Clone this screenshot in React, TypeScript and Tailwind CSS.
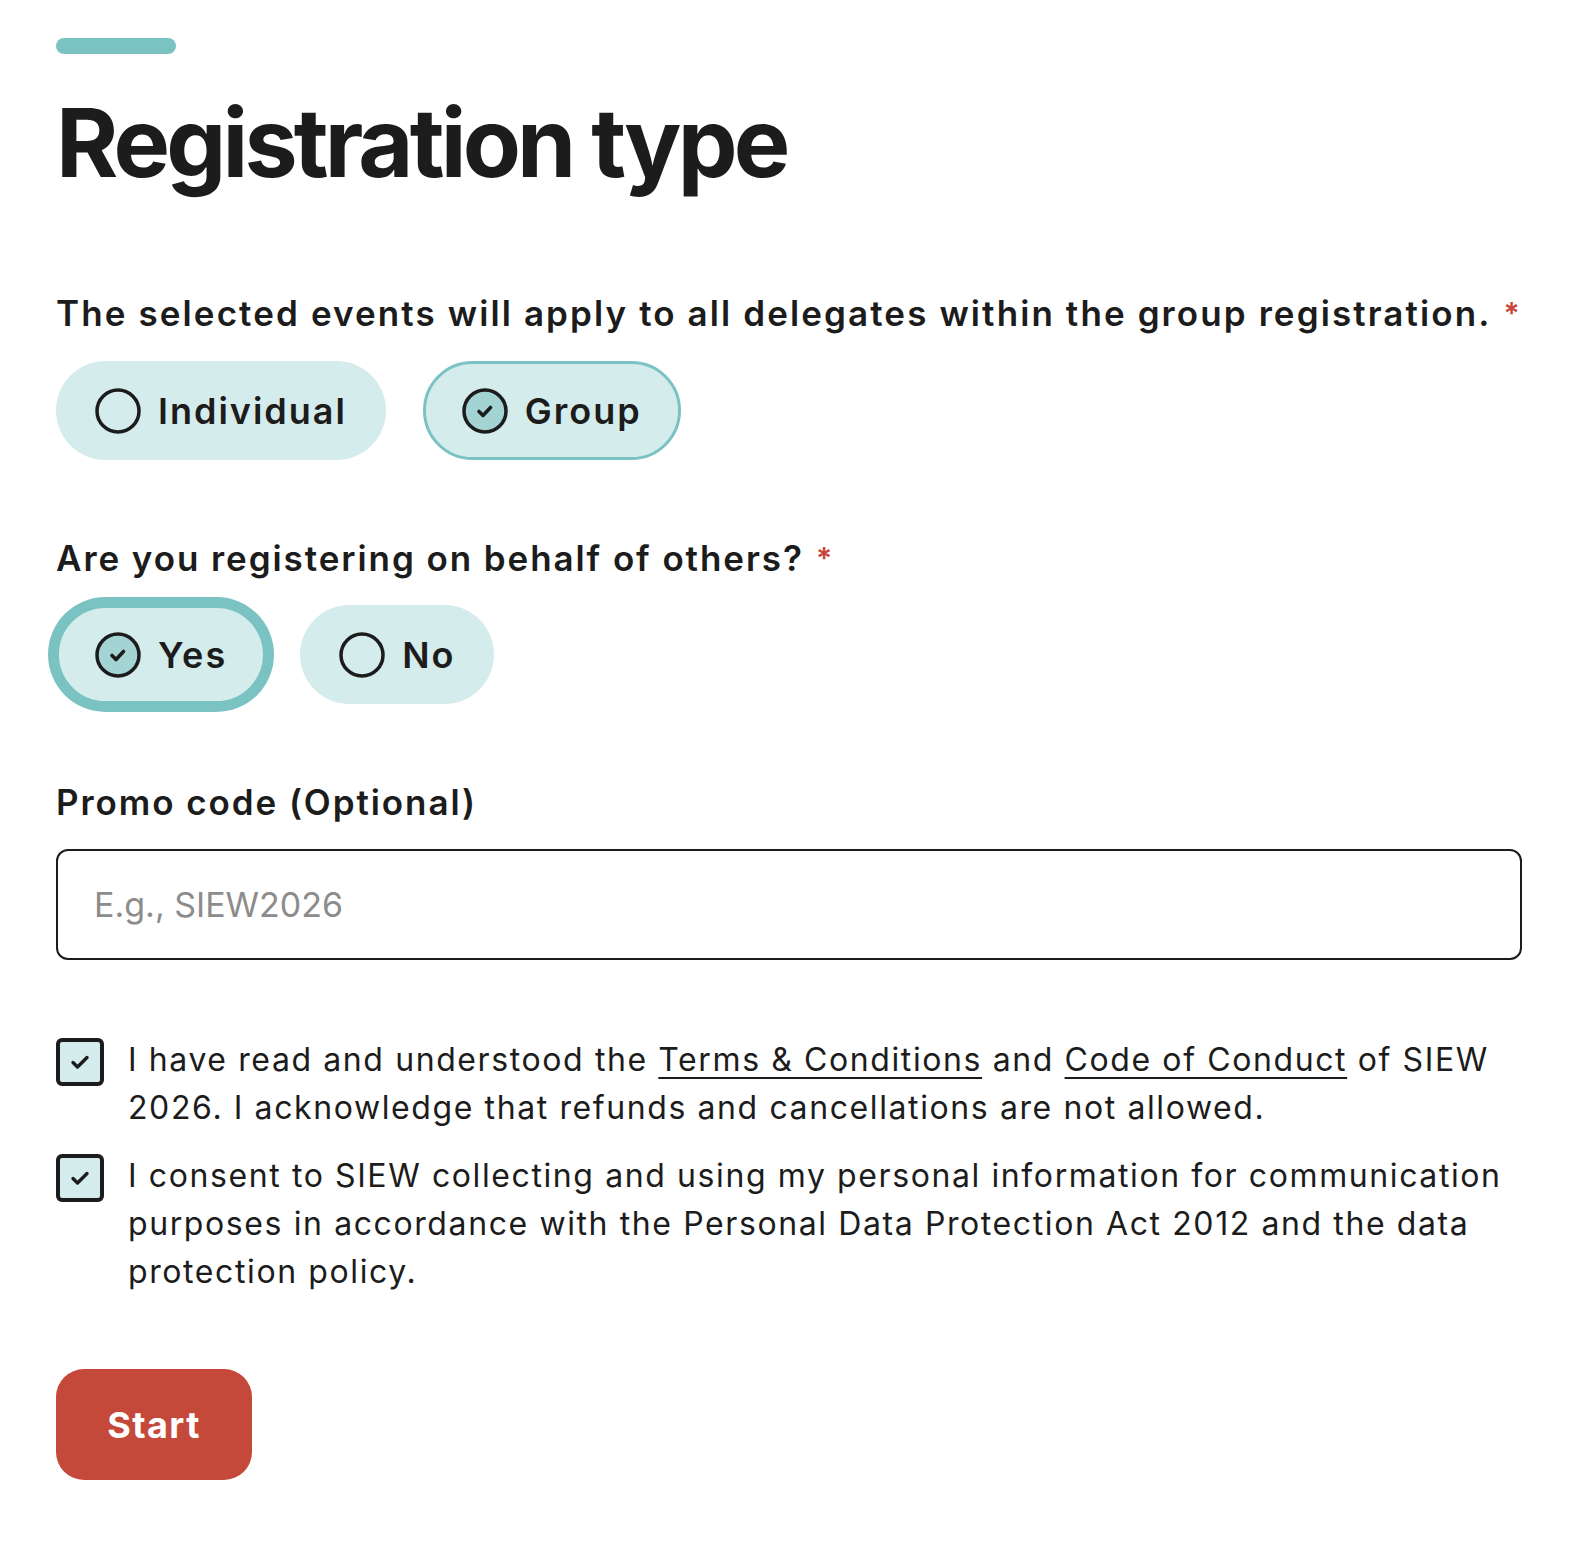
import React, { useState } from "react"

function RadioDot({ checked }: { checked: boolean }) {
  return (
    <svg width="46" height="46" viewBox="0 0 46 46" className="shrink-0">
      <circle cx="23" cy="23" r="21" fill={checked ? "#a3d4d3" : "none"} stroke="#1c1c1c" strokeWidth="3.5" />
      {checked && (
        <path d="M17 23.5l4 4 7.5-8" fill="none" stroke="#1c1c1c" strokeWidth="3.6" strokeLinecap="round" strokeLinejoin="round" />
      )}
    </svg>
  )
}

function Pill({
  label,
  checked,
  focused,
  onClick,
}: {
  label: string
  checked: boolean
  focused?: boolean
  onClick: () => void
}) {
  return (
    <button
      type="button"
      onClick={onClick}
      className={
        "flex h-[99px] items-center gap-[17px] rounded-full bg-[#d4ecec] pl-[36px] pr-[36px] text-[36px] font-semibold tracking-[0.055em] text-[#1c1c1c] " +
        (checked ? "border-[3px] border-[#7ac3c2] " : "border-[3px] border-transparent ") +
        (focused ? "ring-[8px] ring-[#7ac3c2]" : "")
      }
    >
      <RadioDot checked={checked} />
      <span>{label}</span>
    </button>
  )
}

function Checkbox({ checked, onClick }: { checked: boolean; onClick: () => void }) {
  return (
    <button
      type="button"
      onClick={onClick}
      className="mt-[2px] flex h-[48px] w-[48px] shrink-0 items-center justify-center rounded-[6px] border-[4px] border-[#1c1c1c] bg-[#d4ecec]"
    >
      {checked && (
        <svg width="26" height="26" viewBox="0 0 26 26">
          <path d="M6 13.5l4.5 4.5L20 8.5" fill="none" stroke="#1c1c1c" strokeWidth="3.4" strokeLinecap="round" strokeLinejoin="round" />
        </svg>
      )}
    </button>
  )
}

function Req() {
  return <span className="ml-[12px] align-top text-[30px] text-[#c9463a]">*</span>
}

export default function App() {
  const [type, setType] = useState("group")
  const [behalf, setBehalf] = useState("yes")
  const [terms, setTerms] = useState(true)
  const [consent, setConsent] = useState(true)

  return (
    <div className="min-h-screen bg-white px-[56px] pt-[38px] pb-[60px] font-['Inter',sans-serif] text-[#1c1c1c]">
      {/* accent bar */}
      <div className="h-[16px] w-[120px] rounded-full bg-[#7ac3c2]" />

      <h1 className="mt-[39px] text-[95px] font-bold leading-[100px] tracking-[-0.04em]">Registration type</h1>

      {/* Registration type */}
      <div className="mt-[98px]">
        <p className="text-[35px] font-semibold leading-[44px] tracking-[0.06em]">
          The selected events will apply to all delegates within the group registration.
          <Req />
        </p>
        <div className="mt-[26px] flex gap-[37px]">
          <Pill label="Individual" checked={type === "individual"} onClick={() => setType("individual")} />
          <Pill label="Group" checked={type === "group"} onClick={() => setType("group")} />
        </div>
      </div>

      {/* On behalf */}
      <div className="mt-[76px]">
        <p className="text-[35px] font-semibold leading-[44px] tracking-[0.055em]">
          Are you registering on behalf of others?
          <Req />
        </p>
        <div className="mt-[25px] flex gap-[34px]">
          <Pill label="Yes" checked={behalf === "yes"} focused onClick={() => setBehalf("yes")} />
          <Pill label="No" checked={behalf === "no"} onClick={() => setBehalf("no")} />
        </div>
      </div>

      {/* Promo code */}
      <div className="mt-[76px]">
        <p className="text-[35px] font-semibold leading-[44px] tracking-[0.055em]">Promo code (Optional)</p>
        <input
          placeholder="E.g., SIEW2026"
          className="mt-[25px] h-[111px] w-full rounded-[12px] border-[2px] border-[#1c1c1c] px-[36px] text-[34px] placeholder:text-[#8c8c8c] outline-none"
        />
      </div>

      {/* Agreements */}
      <div className="mt-[76px] flex flex-col gap-[20px]">
        <div className="flex gap-[24px]">
          <Checkbox checked={terms} onClick={() => setTerms(!terms)} />
          <p className="text-[32px] leading-[48px] tracking-[0.05em]">
            I have read and understood the{" "}
            <a href="#" className="underline decoration-[2px] underline-offset-[6px]">Terms &amp; Conditions</a> and{" "}
            <a href="#" className="underline decoration-[2px] underline-offset-[6px]">Code of Conduct</a> of SIEW 2026. I acknowledge
            that refunds and cancellations are not allowed.
          </p>
        </div>
        <div className="flex gap-[24px]">
          <Checkbox checked={consent} onClick={() => setConsent(!consent)} />
          <p className="text-[32px] leading-[48px] tracking-[0.05em]">
            I consent to SIEW collecting and using my personal information for communication purposes in accordance with the
            Personal Data Protection Act 2012 and the data protection policy.
          </p>
        </div>
      </div>

      <button
        type="button"
        className="mt-[73px] flex h-[111px] w-[196px] items-center justify-center rounded-[28px] bg-[#c4493a] text-[36px] font-bold tracking-[0.04em] text-white"
      >
        Start
      </button>
    </div>
  )
}
